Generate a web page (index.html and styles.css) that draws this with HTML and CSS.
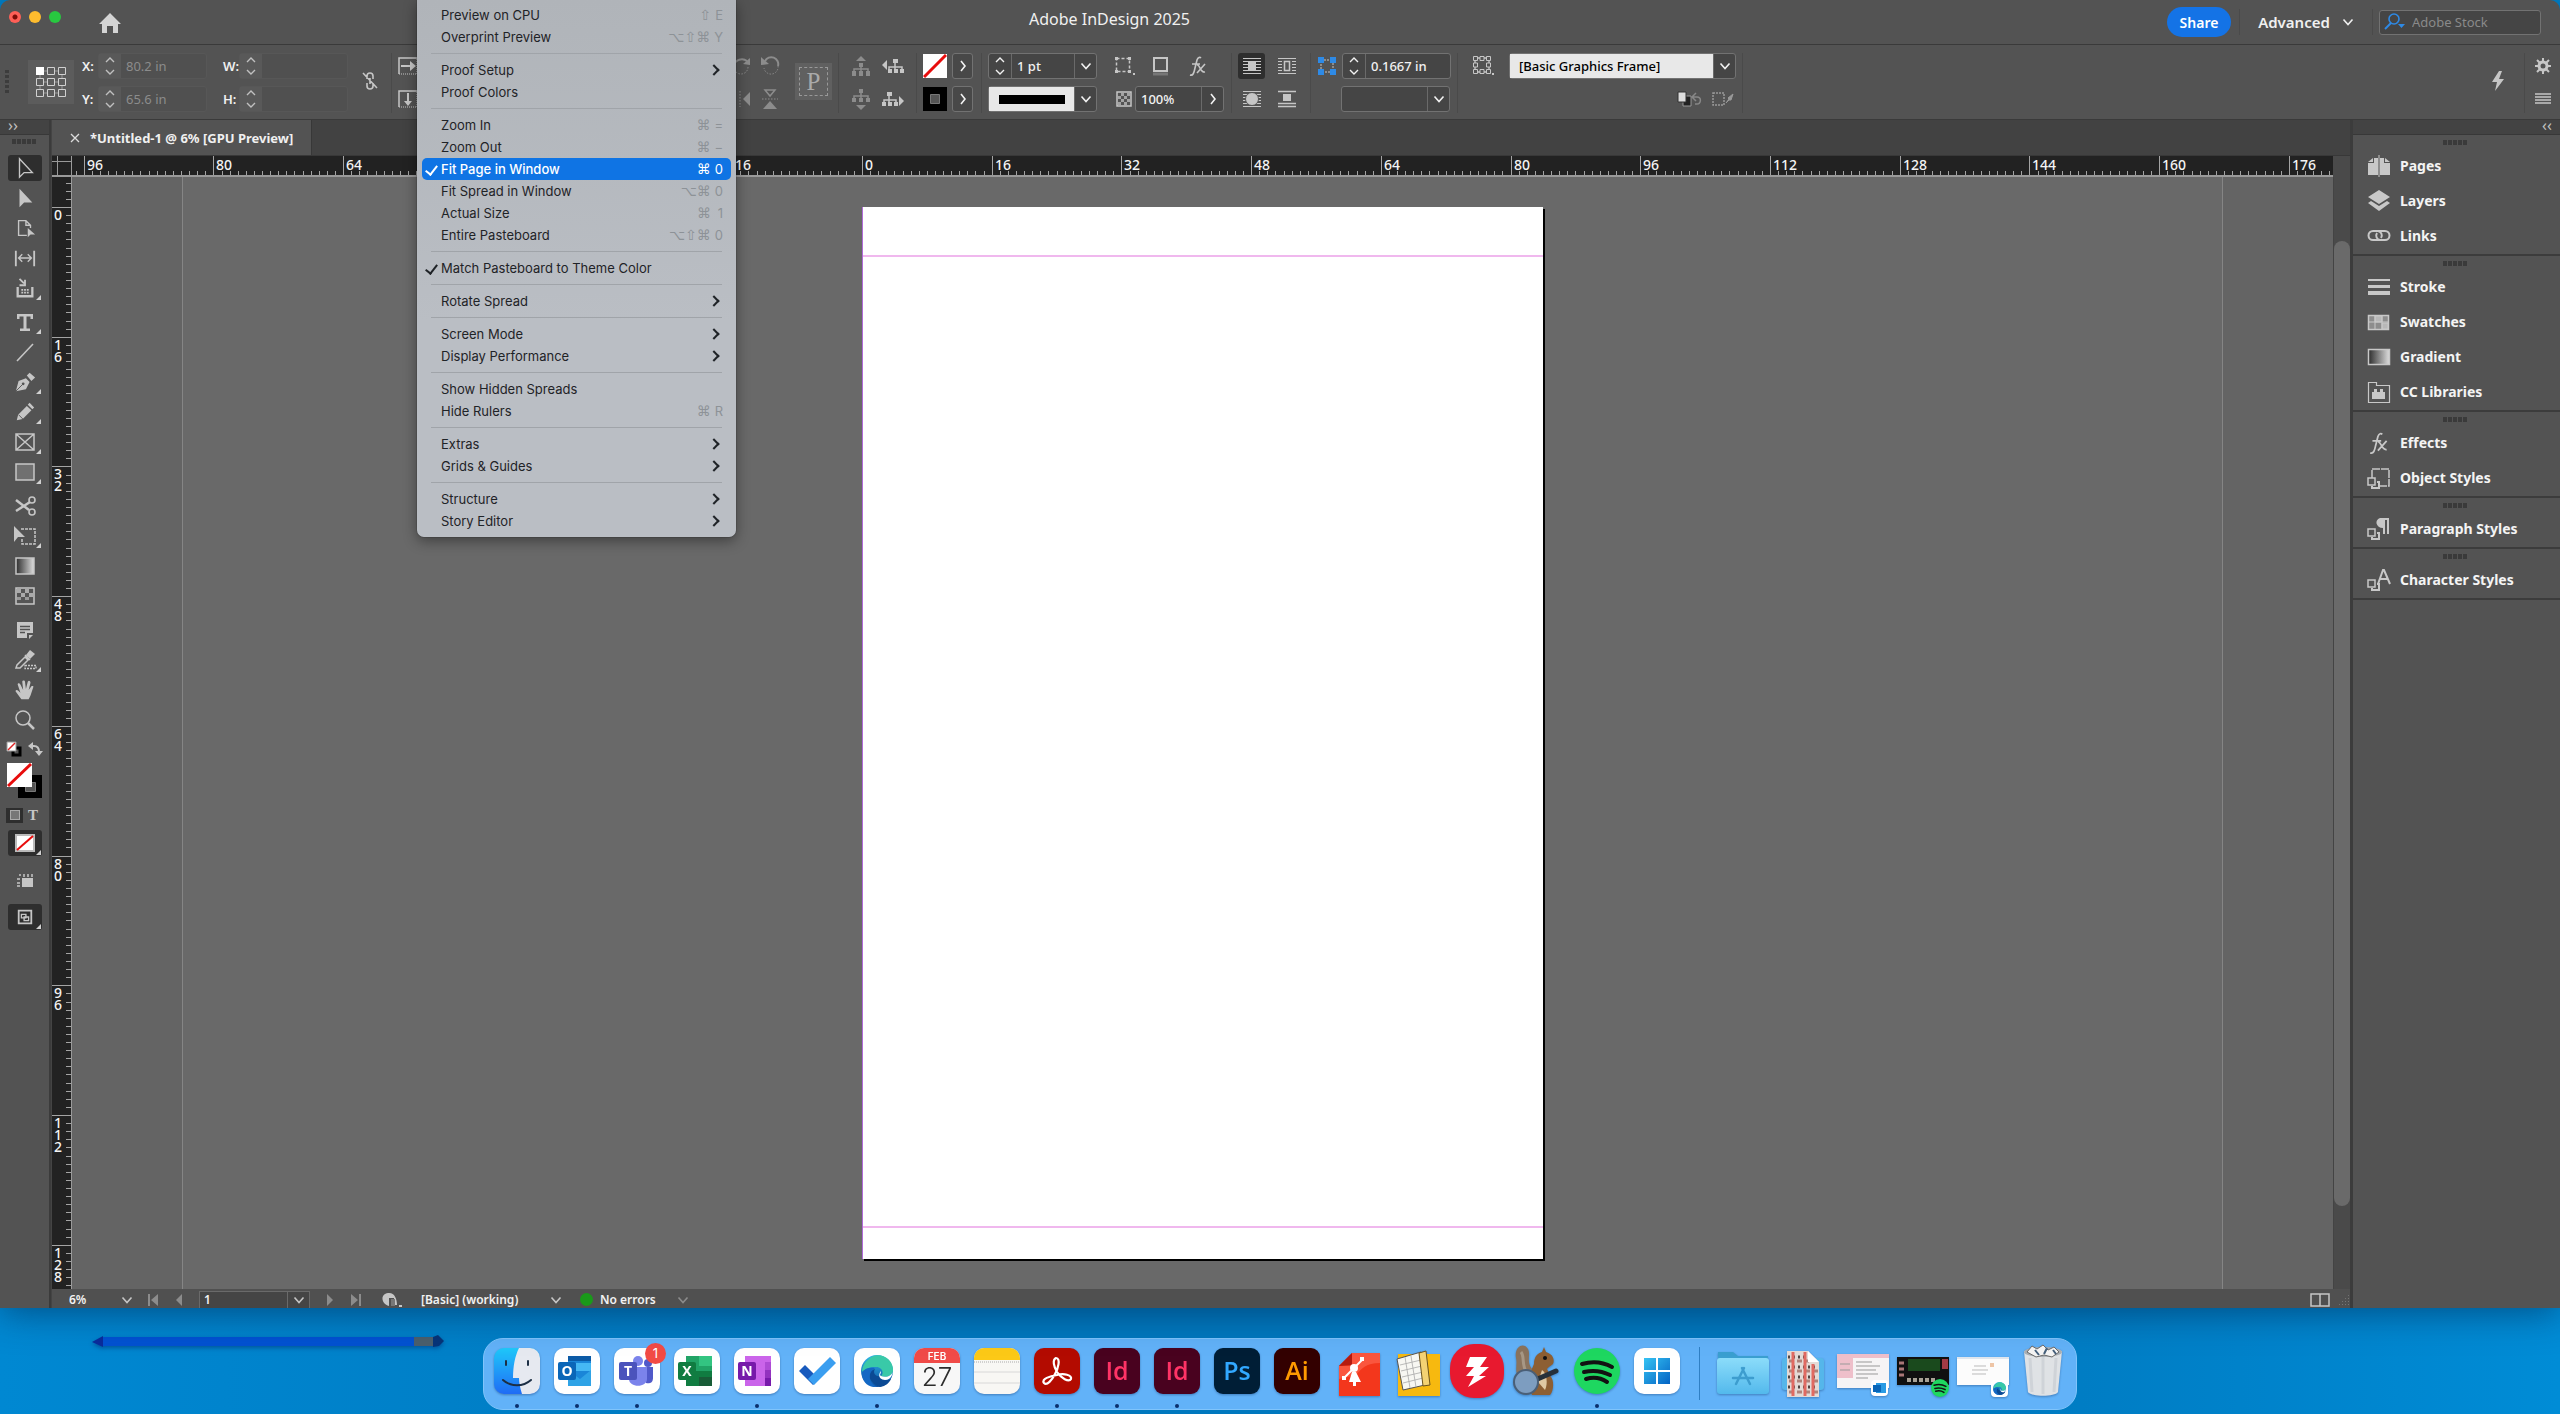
FILE: index.html
```html
<!DOCTYPE html>
<html lang="en">
<head>
<meta charset="utf-8">
<title>Adobe InDesign 2025</title>
<link rel="stylesheet" href="styles.css">
</head>
<body>
<svg class="sprite" aria-hidden="true">
  <defs>
    <linearGradient id="g-dark"><stop offset="0" stop-color="#2c2c2c"/><stop offset="1" stop-color="#dedede"/></linearGradient>
    <linearGradient id="g-finder" x2="0" y2="1"><stop offset="0" stop-color="#1fc8fa"/><stop offset="1" stop-color="#1f6cf5"/></linearGradient>
    <linearGradient id="g-edge" x2="0" y2="1"><stop offset="0" stop-color="#2fb6e8"/><stop offset="1" stop-color="#0c4fa0"/></linearGradient>
    <linearGradient id="g-win" x2="1" y2="1"><stop offset="0" stop-color="#35c3f3"/><stop offset="1" stop-color="#0463c4"/></linearGradient>
    <linearGradient id="g-folder" x2="0" y2="1"><stop offset="0" stop-color="#8bdcfa"/><stop offset="1" stop-color="#53b9ec"/></linearGradient>
  </defs>
  <symbol id="chev" viewBox="0 0 12 12"><path d="M1.500 3.500 6 8.500 10.500 3.500" fill="none" stroke="currentColor" stroke-width="1.600"/></symbol>
  <symbol id="chev-r" viewBox="0 0 12 12"><path d="M4 1 8 6 4 11" fill="none" stroke="currentColor" stroke-width="1.600"/></symbol>
  <symbol id="spin" viewBox="0 0 12 20"><path d="M2 6 6 2 10 6M2 14 6 18 10 14" fill="none" stroke="currentColor" stroke-width="1.400"/></symbol>
  <symbol id="home" viewBox="0 0 24 20"><path d="M12 0 1 11h3v9h5v-7h6v7h5v-9h3Z" fill="currentColor"/></symbol>
  <symbol id="refpoint" viewBox="0 0 46 44"><g fill="none" stroke="#d0d0d0"><path d="M15 11h5M26 11h5M15 22h5M26 22h5M15 33h5M26 33h5M12 15v3M12 26v3M34 15v3M34 26v3" stroke="#9a9a9a"/><path d="M19.500 7.500h7v7h-7zM30.500 7.500h7v7h-7zM8.500 18.500h7v7h-7zM19.500 18.500h7v7h-7zM30.500 18.500h7v7h-7zM8.500 29.500h7v7h-7zM19.500 29.500h7v7h-7zM30.500 29.500h7v7h-7z"/></g><path d="M8 7h8v8H8z" fill="#fff"/></symbol>
  <symbol id="unlink" viewBox="0 0 16 20"><path d="M5 8V5a3 3 0 0 1 6 0v3M5 12v3a3 3 0 0 0 6 0v-3M8 7v6M1 2l14 15" fill="none" stroke="currentColor" stroke-width="1.600"/></symbol>
  <symbol id="scale-x" viewBox="0 0 20 20"><path d="M19 2H1v16" fill="none" stroke="currentColor" stroke-width="1.500"/><path d="M1 18h18V2" fill="none" stroke="currentColor" stroke-dasharray="1 1"/><path d="M3 9h9V5l6 5-6 5v-4H3z" fill="currentColor"/></symbol>
  <symbol id="scale-y" viewBox="0 0 20 20"><path d="M19 2H1v16" fill="none" stroke="currentColor" stroke-width="1.500"/><path d="M1 18h18V2" fill="none" stroke="currentColor" stroke-dasharray="1 1"/><path d="M9 4h2v8h3l-4 5-4-5h3z" fill="currentColor"/></symbol>
  <symbol id="rot-cw" viewBox="0 0 20 20"><path d="M2 9a8 7 0 0 1 13-4" fill="none" stroke="currentColor" stroke-width="2"/><path d="m11 8 7 1V2z" fill="currentColor"/><path d="M16 11a7 7 0 0 1-14 0" fill="none" stroke="currentColor" stroke-dasharray="1.500 1.500"/></symbol>
  <symbol id="rot-ccw" viewBox="0 0 20 20"><path d="M5 5a7 7 0 0 1 13 5" fill="none" stroke="currentColor" stroke-width="2"/><path d="m9 8-8 1V1z" fill="currentColor"/><path d="M18 10a7 7 0 0 1-14 2" fill="none" stroke="currentColor" stroke-dasharray="1.500 1.500"/></symbol>
  <symbol id="flip-h" viewBox="0 0 20 20"><path d="M8 2v16" stroke="currentColor" stroke-dasharray="1.500 1.500"/><path d="M18 3v14l-7-7z" fill="currentColor"/></symbol>
  <symbol id="flip-v" viewBox="0 0 20 20"><path d="M2 10h16" stroke="currentColor" stroke-dasharray="1.500 1.500"/><path d="M5 1h10l-5 6z" fill="none" stroke="currentColor" stroke-width="1.500"/><path d="M3 20h14l-7-8z" fill="currentColor"/></symbol>
  <symbol id="tree-up" viewBox="0 0 24 22"><path d="m7 6 5-5 5 5z" fill="currentColor"/><path d="M12 8v6M5 17v-3h14v3M12 14v3" fill="none" stroke="currentColor" stroke-width="1.500"/><path d="M10 8h4v4h-4zM3 16h4v5H3zM10 16h4v5h-4zM17 16h4v5h-4z" fill="currentColor"/></symbol>
  <symbol id="tree-dn" viewBox="0 0 24 22"><path d="m7 17 5 5 5-5z" fill="currentColor"/><path d="M12 2v6M5 11V8h14v3M12 8v3" fill="none" stroke="currentColor" stroke-width="1.500"/><path d="M10 1h4v4h-4zM3 10h4v4H3zM10 10h4v4h-4zM17 10h4v4h-4z" fill="currentColor"/></symbol>
  <symbol id="tree-l" viewBox="0 0 24 20"><path d="M6 4v10L1 9z" fill="currentColor"/><path d="M14 4v7M8 14v-3h13v3M14 11v3" fill="none" stroke="currentColor" stroke-width="1.500"/><path d="M12 3h5v4h-5zM7 13h4v4H7zM13 13h4v4h-4zM19 13h4v4h-4z" fill="currentColor"/></symbol>
  <symbol id="tree-r" viewBox="0 0 24 20"><path d="M18 7v10l5-5z" fill="currentColor"/><path d="M8 4v7M3 14v-3h12v3M8 11v3" fill="none" stroke="currentColor" stroke-width="1.500"/><path d="M6 3h5v4H6zM1 13h4v4H1zM7 13h4v4H7zM13 13h4v4h-4z" fill="currentColor"/></symbol>
  <symbol id="none" viewBox="0 0 24 24"><path d="M0 0h24v24H0z" fill="#fff"/><path d="M1 23 23 1" stroke="#e80c0c" stroke-width="3"/></symbol>
  <symbol id="stroke-sw" viewBox="0 0 24 24"><path d="M0 0h24v24H0z" fill="#000"/><path d="M7.500 7.500h9v9h-9z" fill="#555" stroke="#777"/></symbol>
  <symbol id="corner-opt" viewBox="0 0 22 22"><path d="M3.500 3.500h13v13h-13z" fill="none" stroke="currentColor" stroke-dasharray="3 2" stroke-width="1.500"/><path d="M2 2h3v3H2zM15 2h3v3h-3zM2 15h3v3H2zM15 15h3v3h-3zM20 18h2v2h-2z" fill="currentColor"/></symbol>
  <symbol id="shadow" viewBox="0 0 22 22"><path d="M4 3h13v13H4z" fill="none" stroke="currentColor" stroke-width="2"/><path d="M3 19h15" stroke="#777" stroke-width="3"/></symbol>
  <symbol id="fx" viewBox="0 0 22 22"><path d="M3 20c3 1 4-2 5-7l2-8c1-3 3-3 4-2M5 9h8M10 10c3-1 3 8 8 7M18 9l-8 9" fill="none" stroke="currentColor" stroke-width="1.600"/></symbol>
  <symbol id="opacity" viewBox="0 0 22 22"><path d="M4 4h14v14H4z" fill="none" stroke="currentColor" stroke-width="1.500"/><path d="M8 5h3v3H8zM14 5h3v3h-3zM5 8h3v3H5zM11 8h3v3h-3zM8 11h3v3H8zM14 11h3v3h-3zM5 14h3v3H5zM11 14h3v3h-3z" fill="currentColor" opacity=".7"/></symbol>
  <symbol id="wrap-none" viewBox="0 0 20 18"><path d="M1 1.500h18M1 4.500h18M1 7.500h18M1 10.500h18M1 13.500h18M1 16.500h18" stroke="currentColor"/><path d="M6 4h8v10H6z" fill="currentColor"/></symbol>
  <symbol id="wrap-box" viewBox="0 0 20 18"><path d="M1 1.500h18M1 4.500h4M15 4.500h4M1 7.500h4M15 7.500h4M1 10.500h4M15 10.500h4M1 13.500h4M15 13.500h4M1 16.500h18" stroke="currentColor"/><path d="M7.500 4.500h5v9h-5z" fill="none" stroke="currentColor" stroke-width="1.500"/></symbol>
  <symbol id="wrap-shape" viewBox="0 0 20 18"><path d="M1 1.500h18M1 4.500h18M1 7.500h18M1 10.500h18M1 13.500h18M1 16.500h18" stroke="currentColor"/><circle cx="10" cy="9" r="6.500" fill="currentColor" stroke="#535353"/></symbol>
  <symbol id="wrap-jump" viewBox="0 0 20 18"><path d="M1 1.500h18M1 13.500h18M1 16.500h18" stroke="currentColor" stroke-width="1.500"/><path d="M6 4h8v7H6z" fill="currentColor"/></symbol>
  <symbol id="corner-blue" viewBox="0 0 20 20"><path d="M4 4h12v12H4z" fill="none" stroke="#c6c6c6" stroke-dasharray="2 1"/><path d="M1 1h6v6H1zM13 1h6v6h-6zM1 13h6v6H1zM13 13h6v6h-6z" fill="#2e8ae6"/></symbol>
  <symbol id="obj-style" viewBox="0 0 22 22"><path d="M3 3h14v14H3z" fill="none" stroke="currentColor" stroke-width="1.300"/><g fill="#535353" stroke="currentColor"><path d="M1.500 1.500h4v4h-4zM8 1.500h4v4H8zM14.500 1.500h4v4h-4zM1.500 8h4v4h-4zM14.500 8h4v4h-4zM1.500 14.500h4v4h-4zM8 14.500h4v4H8zM14.500 14.500h4v4h-4z"/></g><path d="M20 18h2v2h-2z" fill="currentColor"/></symbol>
  <symbol id="clear-ovr" viewBox="0 0 28 20"><path d="M8 7h8v10H8z" fill="#222" stroke="#999"/><path d="M3 3h8v10H3z" fill="#ddd" stroke="#333"/><path d="M20 15h2c4 0 5-7 0-7h-4M21 4l-4 4 4 4" fill="none" stroke="#888" stroke-width="1.500"/></symbol>
  <symbol id="redefine" viewBox="0 0 24 20"><path d="M2 4h11v12H2z" fill="none" stroke="#999" stroke-width="1.500" stroke-dasharray="2 1"/><path d="m15 14 3-4-1-1 5-4-2 6h-2z" stroke="#999" fill="#999"/></symbol>
  <symbol id="bolt" viewBox="0 0 16 20"><path d="M9 0 2 11h5l-2 9 9-12H9l3-8z" fill="currentColor"/></symbol>
  <symbol id="gear" viewBox="0 0 16 16"><circle cx="8" cy="8" r="4" fill="none" stroke="currentColor" stroke-width="3"/><path d="M8 0v3M8 13v3M0 8h3M13 8h3M2 2l3 3M11 11l3 3M14 2l-3 3M5 11l-3 3" stroke="currentColor" stroke-width="2"/></symbol>
  <symbol id="lines" viewBox="0 0 16 14"><path d="M0 2h16M0 5h16M0 8h16M0 11h16" stroke="currentColor" stroke-width="1.500"/></symbol>
  <symbol id="search" viewBox="0 0 22 18"><circle cx="10" cy="6" r="5" fill="none" stroke="currentColor" stroke-width="1.600"/><path d="m7 10-6 6" stroke="currentColor" stroke-width="2"/><path d="M14 11h7l-3.500 4z" fill="currentColor"/></symbol>

  <symbol id="t-select" viewBox="0 0 24 24"><path d="M6 2v20l5-5h9z" fill="none" stroke="currentColor" stroke-width="1.500"/></symbol>
  <symbol id="t-direct" viewBox="0 0 24 24"><path d="M6 2v20l5-5h9z" fill="currentColor"/></symbol>
  <symbol id="t-page" viewBox="0 0 24 24"><path d="M14 20H5V4h8l5 5v3M13 4v5h5" fill="none" stroke="currentColor" stroke-width="1.500"/><path d="M15 12v10l3-3h5z" fill="currentColor"/></symbol>
  <symbol id="t-gap" viewBox="0 0 24 24"><path d="M2 4v17M22 4v17" stroke="currentColor" stroke-width="2"/><path d="M5 12h14M9 8l-4 4 4 4M15 8l4 4-4 4" fill="none" stroke="currentColor" stroke-width="1.500"/></symbol>
  <symbol id="t-content" viewBox="0 0 24 24"><path d="M4 11v10h16V11" fill="none" stroke="currentColor" stroke-width="2.500"/><path d="M8 14h9M8 17h9" stroke="currentColor" stroke-width="2" stroke-dasharray="2 1"/><path d="m6 2 5 5M12 3v6H6" fill="none" stroke="currentColor" stroke-width="2"/></symbol>
  <symbol id="t-type" viewBox="0 0 24 24"><path d="M4 4h16v5h-2.500V6.500h-4v12H17V21H7v-2.500h3.500v-12h-4V9H4z" fill="currentColor"/></symbol>
  <symbol id="t-line" viewBox="0 0 24 24"><path d="M4 21 20 4" stroke="currentColor" stroke-width="1.600"/></symbol>
  <symbol id="t-pen" viewBox="0 0 24 24"><path d="m2 22 3-11 8-3 4 4-4 8zM14 5l3-3 6 5-4 4z" fill="currentColor"/><path d="m2 22 7-7" stroke="#535353"/><circle cx="10" cy="14" r="1.500" fill="#535353"/></symbol>
  <symbol id="t-pencil" viewBox="0 0 24 24"><path d="m3 21 1.500-6L14 5.500 19 10l-9.500 9.500zM15 4l2-2 5 5-2 2z" fill="currentColor"/><path d="m5 15 5 5" stroke="#535353"/></symbol>
  <symbol id="t-frame" viewBox="0 0 24 24"><path d="M3 4h18v16H3zL21 20M21 4 3 20" fill="none" stroke="currentColor" stroke-width="1.500"/></symbol>
  <symbol id="t-rect" viewBox="0 0 24 24"><path d="M3 4h18v16H3z" fill="#707070" stroke="currentColor" stroke-width="1.500"/></symbol>
  <symbol id="t-scissors" viewBox="0 0 24 24"><circle cx="19" cy="6" r="3" fill="none" stroke="currentColor" stroke-width="1.600"/><circle cx="19" cy="18" r="3" fill="none" stroke="currentColor" stroke-width="1.600"/><path d="m3 6 13 10M3 17l14-9" stroke="currentColor" stroke-width="2.500"/></symbol>
  <symbol id="t-free" viewBox="0 0 24 24"><path d="M8 5h14v15H9v-6" fill="none" stroke="currentColor" stroke-width="1.500" stroke-dasharray="3 1"/><path d="M1 2v16l4-5h7z" fill="currentColor"/></symbol>
  <symbol id="t-grad" viewBox="0 0 24 24"><path d="M3 4h18v16H3z" fill="url(#g-dark)" stroke="currentColor" stroke-width="1.500"/></symbol>
  <symbol id="t-feather" viewBox="0 0 24 24"><path d="M3 4h18v16H3z" fill="#555" stroke="currentColor" stroke-width="1.500"/><path d="M4 5h4v4H4zM12 5h4v4h-4zM8 9h4v4H8zM16 9h4v4h-4z" fill="#aaa"/><path d="M4 13h4v3H4zM12 13h4v3h-4z" fill="#999"/></symbol>
  <symbol id="t-note" viewBox="0 0 24 24"><path d="M4 4h16v11h-6v5H4zM16 17h4l-4 4z" fill="currentColor"/><path d="M7 8.500h10M7 11.500h10M7 14.500h5" stroke="#535353" stroke-width="1.500"/></symbol>
  <symbol id="t-drop" viewBox="0 0 24 24"><path d="m3 20 1-3 8-8 3 3-8 8zM12 7l5 5M14 8l4-4" fill="none" stroke="currentColor" stroke-width="1.500"/><path d="m13 7 4-5 5 4-5 5z" fill="currentColor"/><path d="M12 17.500h11v3H12z" fill="none" stroke="currentColor" stroke-width="1.300" stroke-dasharray="2 1"/></symbol>
  <symbol id="t-hand" viewBox="0 0 24 24"><path d="M8 22 2 14c-1-2 1-3 3-1l2 2L4 6c0-2 2-2 3 0l3 6-1-9c0-2 3-2 3 0l1 8 2-8c1-2 3-1 3 1l-2 8 3-4c1-1 3 0 2 1l-3 9-2 4z" fill="currentColor"/></symbol>
  <symbol id="t-zoom" viewBox="0 0 24 24"><circle cx="10" cy="10" r="7" fill="none" stroke="currentColor" stroke-width="1.500"/><path d="m15 15 6 6" stroke="currentColor" stroke-width="2.500"/></symbol>
  <symbol id="t-default" viewBox="0 0 16 16"><path d="M7 7h7v7H7z" fill="#555" stroke="#000" stroke-width="3"/><path d="M1 1h9v9H1z" fill="#fff" stroke="#999"/><path d="m2 9 7-7" stroke="#d22" stroke-width="1.500"/></symbol>
  <symbol id="t-swap" viewBox="0 0 16 16"><path d="M4 5h3c3 0 5 2 5 6" fill="none" stroke="currentColor" stroke-width="2"/><path d="M6 1v8L1 5zM8 10h8l-4 5z" fill="currentColor"/></symbol>
  <symbol id="t-view" viewBox="0 0 20 20"><path d="M7 8h11v9H7z" fill="currentColor"/><path d="M2 9h3M2 13h3M2 16h3M5 4v2M9 4v3M13 4v3M17 4v3" stroke="currentColor" stroke-width="1.500"/></symbol>
  <symbol id="t-screen" viewBox="0 0 20 20"><path d="M3 3h14v14H3z" fill="none" stroke="currentColor" stroke-width="2"/><path d="M6 7h5v4H6zM9 10h5v4H9z" fill="none" stroke="currentColor" stroke-width="1.500"/></symbol>

  <symbol id="p-pages" viewBox="0 0 24 24"><path d="M1 8 6 4v4zM23 8l-5-4v4zM1 9h6V4h4v17H1zM13 4h4v5h6v12H13z" fill="currentColor"/><path d="M12 1v22" stroke="currentColor"/></symbol>
  <symbol id="p-layers" viewBox="0 0 24 24"><path d="m12 1 11 7-11 7L1 8zM1 14l3-2 8 5 8-5 3 2-11 8z" fill="currentColor"/></symbol>
  <symbol id="p-links" viewBox="0 0 24 24"><path d="M13 16H6a4.500 4.500 0 0 1 0-9h5a4.500 4.500 0 0 1 3 7M11 7h7a4.500 4.500 0 0 1 0 9h-5a4.500 4.500 0 0 1-3-7" fill="none" stroke="currentColor" stroke-width="2"/></symbol>
  <symbol id="p-stroke" viewBox="0 0 24 24"><path d="M1 4h22v2H1zM1 10h22v3H1zM1 16h22v4H1z" fill="currentColor"/></symbol>
  <symbol id="p-swatches" viewBox="0 0 24 24"><path d="M1.500 5.500h20v14h-20z" fill="#8d8d8d" stroke="currentColor" stroke-width="1.500"/><path d="M8 6h7v6H8zM15 13h6v6h-6zM2 12h20M8 6v13M15 6v13" stroke="currentColor" fill="#b8b8b8"/></symbol>
  <symbol id="p-grad" viewBox="0 0 24 24"><path d="M1.500 4.500h21v15h-21z" fill="url(#g-dark)" stroke="currentColor" stroke-width="1.500"/></symbol>
  <symbol id="p-cc" viewBox="0 0 24 24"><path d="M1.500 22.500v-20h8v3h13v17z" fill="none" stroke="currentColor" stroke-width="1.200"/><path d="M5 12h2v-3h3v3h3v-3h3v3h2v7H5z" fill="currentColor"/></symbol>
  <symbol id="p-obj" viewBox="0 0 24 24"><path d="M5 12V3h17v17H12" fill="none" stroke="currentColor" stroke-width="1.500" stroke-dasharray="8 1"/><path d="M1 12h7v7H1z" fill="#535353" stroke="currentColor" stroke-width="1.500"/><path d="M10 16h2v6H5v-2" fill="none" stroke="currentColor" stroke-width="2"/></symbol>
  <symbol id="p-para" viewBox="0 0 24 24"><path d="M13 1h9v16h-2V3h-2v14h-2v-6c-7 0-9-8-3-10z" fill="currentColor"/><path d="M1 12h7v7H1z" fill="#535353" stroke="currentColor" stroke-width="1.500"/><path d="M10 16h2v6H5v-2" fill="none" stroke="currentColor" stroke-width="2"/></symbol>
  <symbol id="p-char" viewBox="0 0 24 24"><path d="m11 16 5-14h1l6 14M13 11h8" fill="none" stroke="currentColor" stroke-width="2"/><path d="M1 12h7v7H1z" fill="#535353" stroke="currentColor" stroke-width="1.500"/><path d="M10 16h2v6H5v-2" fill="none" stroke="currentColor" stroke-width="2"/></symbol>

  <symbol id="s-first" viewBox="0 0 12 12"><path d="M1 0h2v12H1zM11 0v12L4 6z" fill="currentColor"/></symbol>
  <symbol id="s-prev" viewBox="0 0 12 12"><path d="M9 0v12L3 6z" fill="currentColor"/></symbol>
  <symbol id="s-next" viewBox="0 0 12 12"><path d="M3 0v12l6-6z" fill="currentColor"/></symbol>
  <symbol id="s-last" viewBox="0 0 12 12"><path d="M9 0h2v12H9zM1 0v12l7-6z" fill="currentColor"/></symbol>
  <symbol id="s-pre" viewBox="0 0 22 16"><path d="M8 14C0 12-1 2 7 1c6-1 9 5 9 12h-3V6H8z" fill="currentColor"/><path d="M10 7h4v7h-4z" fill="#777"/><path d="M18 13h3v2h-3z" fill="currentColor"/></symbol>
  <symbol id="s-split" viewBox="0 0 20 14"><path d="M1 1h18v12H1zM10 1v12" fill="none" stroke="currentColor" stroke-width="1.500"/></symbol>

  <symbol id="edge-mark" viewBox="0 0 32 32"><circle cx="16" cy="16" r="16" fill="url(#g-edge)"/><path d="M8 4c10-9 25 0 24 12-1 5-7 7-12 5 4-4 0-10-6-9-6 0-9 2-13 5 0-5 3-10 7-13z" fill="#39c9a8"/><path d="M20 21c-7 1-8-4-6-7-8 2-8 13 5 18 6-1 9-4 11-8-4 2-9 1-10-3z" fill="#0b4a94"/><path d="M32 16c-1 5-7 7-12 5-2-1 0-2 0-5-2 2-4 8 4 9 3 0 6-2 7-5z" fill="#fff"/><path d="M14 13c-7 4-8 14 2 19C6 33 0 25 1 17c3-4 8-5 13-4z" fill="#1468c4"/></symbol>
  <symbol id="spot-mark" viewBox="0 0 46 46"><circle cx="23" cy="23" r="23" fill="#1ed760"/><path d="M8 16c10-3 21-2 30 3M10 24c9-2 18-1 26 3M12 31c7-2 15-1 21 3" fill="none" stroke="#121212" stroke-width="4" stroke-linecap="round"/></symbol>
</svg>

<div class="window">
  <header class="titlebar">
    <div class="lights"><span class="light close"></span><span class="light min"></span><span class="light max"></span></div>
    <button class="home" aria-label="Home"><svg width="24" height="20"><use href="#home"/></svg></button>
    <h1>Adobe InDesign 2025</h1>
    <div class="title-actions">
      <button class="share">Share</button>
      <button class="workspace-pick">Advanced <svg width="12" height="12"><use href="#chev"/></svg></button>
      <label class="stock"><svg width="22" height="18"><use href="#search"/></svg><input type="search" placeholder="Adobe Stock" aria-label="Search Adobe Stock"></label>
    </div>
  </header>

  <section class="control-bar" aria-label="Control">
    <div class="grip-v"></div>
    <button class="refpoint" aria-label="Reference point"><svg width="46" height="44"><use href="#refpoint"/></svg></button>
    <div class="rows">
      <div class="row"><label for="fx-x">X:</label><div class="combo off"><button aria-label="Step X"><svg width="12" height="20"><use href="#spin"/></svg></button><input id="fx-x" value="80.2 in"></div></div>
      <div class="row"><label for="fx-y">Y:</label><div class="combo off"><button aria-label="Step Y"><svg width="12" height="20"><use href="#spin"/></svg></button><input id="fx-y" value="65.6 in"></div></div>
    </div>
    <div class="rows">
      <div class="row"><label for="fx-w">W:</label><div class="combo off"><button aria-label="Step W"><svg width="12" height="20"><use href="#spin"/></svg></button><input id="fx-w"></div></div>
      <div class="row"><label for="fx-h">H:</label><div class="combo off"><button aria-label="Step H"><svg width="12" height="20"><use href="#spin"/></svg></button><input id="fx-h"></div></div>
    </div>
    <button class="tall" aria-label="Constrain proportions"><svg width="16" height="20"><use href="#unlink"/></svg></button>
    <div class="rows ruled">
      <div class="row"><svg width="20" height="20"><use href="#scale-x"/></svg></div>
      <div class="row"><svg width="20" height="20"><use href="#scale-y"/></svg></div>
    </div>
    <div class="rows dim">
      <div class="row gap-m"><svg width="20" height="20"><use href="#rot-cw"/></svg><svg width="20" height="20"><use href="#rot-ccw"/></svg></div>
      <div class="row gap-m"><svg width="20" height="20"><use href="#flip-h"/></svg><svg width="20" height="20"><use href="#flip-v"/></svg></div>
    </div>
    <div class="p-box"><span>P</span></div>
    <div class="rows ruled inset-m">
      <div class="row gap-m"><svg class="dim" width="24" height="22"><use href="#tree-up"/></svg><svg width="24" height="20"><use href="#tree-l"/></svg></div>
      <div class="row gap-m"><svg class="dim" width="24" height="22"><use href="#tree-dn"/></svg><svg width="24" height="20"><use href="#tree-r"/></svg></div>
    </div>
    <div class="rows ruled">
      <div class="row gap-s"><svg width="24" height="24"><use href="#none"/></svg><button class="boxed" aria-label="Fill options"><svg width="12" height="12"><use href="#chev-r"/></svg></button></div>
      <div class="row gap-s"><svg width="24" height="24"><use href="#stroke-sw"/></svg><button class="boxed" aria-label="Stroke options"><svg width="12" height="12"><use href="#chev-r"/></svg></button></div>
    </div>
    <div class="rows ruled">
      <div class="row"><div class="combo"><button aria-label="Step weight"><svg width="12" height="20"><use href="#spin"/></svg></button><input value="1 pt" aria-label="Stroke weight"><button aria-label="Weight list"><svg width="12" height="12"><use href="#chev"/></svg></button></div></div>
      <div class="row"><div class="combo"><div class="stroke-sample"></div><button aria-label="Stroke type"><svg width="12" height="12"><use href="#chev"/></svg></button></div></div>
    </div>
    <div class="rows inset-s">
      <div class="row gap-l"><svg width="22" height="22"><use href="#corner-opt"/></svg><svg width="22" height="22"><use href="#shadow"/></svg><svg width="22" height="22"><use href="#fx"/></svg></div>
      <div class="row"><svg width="22" height="22"><use href="#opacity"/></svg><div class="combo opacity"><input value="100%" aria-label="Opacity"><button aria-label="Opacity slider"><svg width="12" height="12"><use href="#chev-r"/></svg></button></div></div>
    </div>
    <div class="rows ruled">
      <div class="row gap-m"><button class="wrap on" aria-label="No text wrap"><svg width="20" height="18"><use href="#wrap-none"/></svg></button><button class="wrap" aria-label="Wrap around box"><svg width="20" height="18"><use href="#wrap-box"/></svg></button></div>
      <div class="row gap-m"><button class="wrap" aria-label="Wrap around shape"><svg width="20" height="18"><use href="#wrap-shape"/></svg></button><button class="wrap" aria-label="Jump object"><svg width="20" height="18"><use href="#wrap-jump"/></svg></button></div>
    </div>
    <div class="rows ruled">
      <div class="row gap-s"><svg width="20" height="20"><use href="#corner-blue"/></svg><div class="combo"><button aria-label="Step corner"><svg width="12" height="20"><use href="#spin"/></svg></button><input value="0.1667 in" aria-label="Corner size"></div></div>
      <div class="row end"><div class="combo"><select aria-label="Corner shape"><option></option></select><button aria-label="Corner list"><svg width="12" height="12"><use href="#chev"/></svg></button></div></div>
    </div>
    <div class="rows ruled inset-l">
      <div class="row gap-l"><svg width="22" height="22"><use href="#obj-style"/></svg><div class="combo style"><select aria-label="Object style"><option>[Basic Graphics Frame]</option></select><button aria-label="Object style list"><svg width="12" height="12"><use href="#chev"/></svg></button></div></div>
      <div class="row end gap-m"><svg width="28" height="20"><use href="#clear-ovr"/></svg><svg width="24" height="20"><use href="#redefine"/></svg></div>
    </div>
    <div class="rows ruled"></div>
    <button class="tall" aria-label="Quick apply"><svg width="16" height="20"><use href="#bolt"/></svg></button>
    <div class="rows ruled inset-m">
      <div class="row"><svg width="16" height="16"><use href="#gear"/></svg></div>
      <div class="row"><svg width="16" height="14"><use href="#lines"/></svg></div>
    </div>
  </section>

  <div class="workspace">
    <aside class="tools" aria-label="Tools">
      <div class="panel-head">››</div>
      <div class="grip-h"></div>
      <div class="tool-group">
        <button class="on" aria-label="Selection"><svg width="22" height="22"><use href="#t-select"/></svg></button>
        <button aria-label="Direct selection"><svg width="22" height="22"><use href="#t-direct"/></svg></button>
        <button aria-label="Page"><svg width="22" height="22"><use href="#t-page"/></svg></button>
        <button aria-label="Gap"><svg width="24" height="22"><use href="#t-gap"/></svg></button>
        <button class="more" aria-label="Content collector"><svg width="22" height="22"><use href="#t-content"/></svg></button>
      </div>
      <div class="tool-group">
        <button class="more" aria-label="Type"><svg width="24" height="24"><use href="#t-type"/></svg></button>
        <button aria-label="Line"><svg width="24" height="24"><use href="#t-line"/></svg></button>
        <button class="more" aria-label="Pen"><svg width="22" height="22"><use href="#t-pen"/></svg></button>
        <button class="more" aria-label="Pencil"><svg width="22" height="22"><use href="#t-pencil"/></svg></button>
        <button class="more" aria-label="Rectangle frame"><svg width="24" height="24"><use href="#t-frame"/></svg></button>
        <button class="more" aria-label="Rectangle"><svg width="24" height="24"><use href="#t-rect"/></svg></button>
      </div>
      <div class="tool-group">
        <button aria-label="Scissors"><svg width="24" height="24"><use href="#t-scissors"/></svg></button>
        <button class="more" aria-label="Free transform"><svg width="24" height="24"><use href="#t-free"/></svg></button>
        <button aria-label="Gradient swatch"><svg width="24" height="24"><use href="#t-grad"/></svg></button>
        <button aria-label="Gradient feather"><svg width="24" height="24"><use href="#t-feather"/></svg></button>
      </div>
      <div class="tool-group">
        <button aria-label="Note"><svg width="24" height="24"><use href="#t-note"/></svg></button>
        <button class="more" aria-label="Color theme"><svg width="24" height="24"><use href="#t-drop"/></svg></button>
        <button aria-label="Hand"><svg width="22" height="22"><use href="#t-hand"/></svg></button>
        <button aria-label="Zoom"><svg width="24" height="24"><use href="#t-zoom"/></svg></button>
      </div>
      <div class="pair"><svg width="16" height="16"><use href="#t-default"/></svg><svg width="16" height="16"><use href="#t-swap"/></svg></div>
      <svg class="fill-stroke" width="36" height="36" viewBox="0 0 36 36"><path d="M11 12h24v23H11z" fill="#000"/><path d="M18.500 19.500h10v9h-10z" fill="#555" stroke="#777"/><path d="M0 0h25v24H0z" fill="#fff"/><path d="M1 23 24 1" stroke="#e80c0c" stroke-width="3"/></svg>
      <div class="pair"><span class="format-box"><i></i></span><span class="format-t">T</span></div>
      <button class="solo on more" aria-label="Apply none"><svg width="20" height="18" viewBox="0 0 20 18"><path d="M1 1h18v16H1z" fill="#fff" stroke="#bbb" stroke-width="2"/><path d="m2 16 16-14" stroke="#e80c0c" stroke-width="2"/></svg></button>
      <button class="solo" aria-label="View options"><svg width="20" height="20"><use href="#t-view"/></svg></button>
      <button class="solo on more" aria-label="Screen mode"><svg width="18" height="18"><use href="#t-screen"/></svg></button>
    </aside>

    <main class="document">
      <div class="tabs"><div class="tab"><button aria-label="Close document"><svg width="10" height="10" viewBox="0 0 10 10"><path d="m1 1 8 8M9 1 1 9" stroke="#ddd" stroke-width="1.300"/></svg></button><span>*Untitled-1 @ 6% [GPU Preview]</span></div></div>
      <div class="editor">
        <div class="ruler-corner"></div>
        <svg class="ruler ruler-x" id="ruler-x"></svg>
        <div class="scroll-top"></div>
        <svg class="ruler ruler-y" id="ruler-y"></svg>
        <div class="canvas" id="canvas"><div class="pasteboard"><div class="page" id="page"></div></div></div>
        <div class="scrollbar"><div class="thumb"></div></div>
      </div>
      <footer class="status">
        <div class="zoom-pick"><select aria-label="Zoom level"><option>6%</option></select><svg width="12" height="12"><use href="#chev"/></svg></div>
        <svg class="dim" width="12" height="12"><use href="#s-first"/></svg>
        <svg class="dim" width="12" height="12"><use href="#s-prev"/></svg>
        <div class="page-pick"><input value="1" aria-label="Page number"><button aria-label="Page list"><svg width="12" height="12"><use href="#chev"/></svg></button></div>
        <svg class="dim" width="12" height="12"><use href="#s-next"/></svg>
        <svg class="dim" width="12" height="12"><use href="#s-last"/></svg>
        <svg class="preflight" width="22" height="16"><use href="#s-pre"/></svg>
        <div class="profile-pick"><select aria-label="Preflight profile"><option>[Basic] (working)</option></select><svg width="12" height="12"><use href="#chev"/></svg></div>
        <div class="errors"><i></i><span>No errors</span><svg class="dim" width="12" height="12"><use href="#chev"/></svg></div>
        <svg class="split" width="20" height="14"><use href="#s-split"/></svg>
        <div class="resize"></div>
      </footer>
    </main>

    <aside class="panels" aria-label="Panels">
      <div class="panel-head right">‹‹</div>
      <section><button><svg width="24" height="24"><use href="#p-pages"/></svg>Pages</button><button><svg width="24" height="24"><use href="#p-layers"/></svg>Layers</button><button><svg width="24" height="24"><use href="#p-links"/></svg>Links</button></section>
      <section><button><svg width="24" height="24"><use href="#p-stroke"/></svg>Stroke</button><button><svg width="24" height="24"><use href="#p-swatches"/></svg>Swatches</button><button><svg width="24" height="24"><use href="#p-grad"/></svg>Gradient</button><button><svg width="24" height="24"><use href="#p-cc"/></svg>CC Libraries</button></section>
      <section><button><svg width="24" height="24"><use href="#fx"/></svg>Effects</button><button><svg width="24" height="24"><use href="#p-obj"/></svg>Object Styles</button></section>
      <section><button><svg width="24" height="24"><use href="#p-para"/></svg>Paragraph Styles</button></section>
      <section><button><svg width="24" height="24"><use href="#p-char"/></svg>Character Styles</button></section>
    </aside>
  </div>

  <nav class="menu" aria-label="View">
    <button>Preview on CPU<kbd>⇧<b>E</b></kbd></button>
    <button>Overprint Preview<kbd>⌥⇧⌘<b>Y</b></kbd></button>
    <hr>
    <button class="sub">Proof Setup</button>
    <button>Proof Colors</button>
    <hr>
    <button>Zoom In<kbd>⌘<b>=</b></kbd></button>
    <button>Zoom Out<kbd>⌘<b>−</b></kbd></button>
    <button class="checked active">Fit Page in Window<kbd>⌘<b>0</b></kbd></button>
    <button>Fit Spread in Window<kbd>⌥⌘<b>0</b></kbd></button>
    <button>Actual Size<kbd>⌘<b>1</b></kbd></button>
    <button>Entire Pasteboard<kbd>⌥⇧⌘<b>0</b></kbd></button>
    <hr>
    <button class="checked">Match Pasteboard to Theme Color</button>
    <hr>
    <button class="sub">Rotate Spread</button>
    <hr>
    <button class="sub">Screen Mode</button>
    <button class="sub">Display Performance</button>
    <hr>
    <button>Show Hidden Spreads</button>
    <button>Hide Rulers<kbd>⌘<b>R</b></kbd></button>
    <hr>
    <button class="sub">Extras</button>
    <button class="sub">Grids &amp; Guides</button>
    <hr>
    <button class="sub">Structure</button>
    <button class="sub">Story Editor</button>
  </nav>
</div>

<div class="desktop">
  <svg class="wall-pencil" width="352" height="14" viewBox="0 0 352 14"><path d="m0 7 11-6v11z" fill="#0a2c9c"/><path d="M11 2h311v9H11z" fill="#0252d2"/><path d="M322 2h19v9h-19z" fill="#4b5f6c"/><path d="m341 2 5-2 6 6-5 5-6 1z" fill="#073478"/></svg>
  <div class="dock">
    <div class="app run"><svg width="46" height="46" viewBox="0 0 46 46"><rect width="46" height="46" rx="10" fill="url(#g-finder)"/><path d="M25 0h11a10 10 0 0 1 10 10v26a10 10 0 0 1-10 10h-8c-2-6-3-12-3-16h-6c0-12 2-22 6-30z" fill="#e6e9f0"/><path d="M12 13v4M34 13v4M9 32c8 7 20 7 28 0" fill="none" stroke="#1d2f45" stroke-width="2" stroke-linecap="round"/></svg></div>
    <div class="app run"><svg width="46" height="46" viewBox="0 0 46 46"><rect width="46" height="46" rx="10" fill="#fff"/><path d="M14 8h23v30H14z" fill="#1a86d8"/><path d="M14 8h23v5H14z" fill="#0b5aa6"/><path d="M22 15h15v8H22z" fill="#45b8f4"/><path d="m14 22 12 9 11-9v16H14z" fill="#2fa3e6"/><rect x="4" y="14" width="18" height="18" rx="2" fill="#0a66b8"/><text x="13" y="28" class="ltr">O</text></svg></div>
    <div class="app run"><svg width="46" height="46" viewBox="0 0 46 46"><rect width="46" height="46" rx="10" fill="#fff"/><circle cx="24" cy="13" r="5" fill="#7b83eb"/><circle cx="34" cy="15" r="4" fill="#5059c9"/><path d="M28 19h11v11c0 5-4 6-7 5z" fill="#5059c9"/><path d="M15 19h18v12c0 9-18 9-18 0z" fill="#7b83eb"/><rect x="5" y="14" width="18" height="18" rx="2" fill="#4b53bc"/><text x="14" y="28" class="ltr">T</text></svg><span class="badge">1</span></div>
    <div class="app"><svg width="46" height="46" viewBox="0 0 46 46"><rect width="46" height="46" rx="10" fill="#fff"/><path d="M12 8h26v30H12z" fill="#21a366"/><path d="M25 8h13v10H25z" fill="#33c481"/><path d="M12 23h26v15H12z" fill="#107c41"/><path d="M25 29h13v9H25z" fill="#185c37"/><rect x="4" y="14" width="18" height="18" rx="2" fill="#107c41"/><text x="13" y="28" class="ltr">X</text></svg></div>
    <div class="app run"><svg width="46" height="46" viewBox="0 0 46 46"><rect width="46" height="46" rx="10" fill="#fff"/><path d="M11 8h26v30H11z" fill="#ca64ea"/><path d="M31 14h6v8h-6z" fill="#ae4bd5"/><path d="M31 22h6v8h-6z" fill="#9332bf"/><path d="M31 30h6v8h-6z" fill="#7719aa"/><rect x="4" y="14" width="18" height="18" rx="2" fill="#7719aa"/><text x="13" y="28" class="ltr">N</text></svg></div>
    <div class="app"><svg width="46" height="46" viewBox="0 0 46 46"><rect width="46" height="46" rx="10" fill="#fff"/><path d="m11 17-6 6 14 14 6-6z" fill="#185abd"/><path d="M36 9 42 15 20 37l-6-6z" fill="#3a9ef0"/></svg></div>
    <div class="app run"><svg width="46" height="46" viewBox="0 0 46 46"><rect width="46" height="46" rx="10" fill="#fff"/><use href="#edge-mark" x="7" y="7" width="32" height="32"/></svg></div>
    <div class="app"><svg width="46" height="46" viewBox="0 0 46 46"><rect width="46" height="46" rx="10" fill="#f7f7f7"/><path d="M0 15v-5A10 10 0 0 1 10 0h26a10 10 0 0 1 10 10v5z" fill="#f04b48"/><text x="23" y="12" class="cal-m">FEB</text><text x="23" y="38" class="cal-d">27</text></svg></div>
    <div class="app"><svg width="46" height="46" viewBox="0 0 46 46"><rect width="46" height="46" rx="10" fill="#f8f7f4"/><path d="M0 12v-2A10 10 0 0 1 10 0h26a10 10 0 0 1 10 10v2z" fill="#fcc917"/><path d="M0 14h46" stroke="#aaa" stroke-dasharray="1 1"/><path d="M0 24h46M0 35h46" stroke="#d8d8d8"/></svg></div>
    <div class="app run"><svg width="46" height="46" viewBox="0 0 46 46"><rect width="46" height="46" rx="10" fill="#b30b00"/><path d="M10 35c-3-4 6-7 13-8 7-2 15 0 14 4-2 4-10-1-14-7-3-5-5-12-1-14 5 0 2 11-1 16-3 6-8 12-11 9z" fill="none" stroke="#fff" stroke-width="2.200"/></svg></div>
    <div class="app run"><svg width="46" height="46" viewBox="0 0 46 46"><rect width="46" height="46" rx="9" fill="#49021f"/><text x="23" y="32" class="adobe" fill="#ff3366">Id</text></svg></div>
    <div class="app run"><svg width="46" height="46" viewBox="0 0 46 46"><rect width="46" height="46" rx="9" fill="#49021f"/><text x="23" y="32" class="adobe" fill="#ff3366">Id</text></svg></div>
    <div class="app"><svg width="46" height="46" viewBox="0 0 46 46"><rect width="46" height="46" rx="9" fill="#001e36"/><text x="23" y="32" class="adobe" fill="#31a8ff">Ps</text></svg></div>
    <div class="app"><svg width="46" height="46" viewBox="0 0 46 46"><rect width="46" height="46" rx="9" fill="#330000"/><text x="23" y="32" class="adobe" fill="#ff9a00">Ai</text></svg></div>
    <div class="app"><svg width="46" height="46" viewBox="0 0 46 46"><path d="M18 5h28v43H5V18z" fill="#f3371c"/><path d="m5 18 13-13v12z" fill="#b51b10"/><path d="M18 5h28v10c-14 0-18 5-24 12l-17 4V18h13z" fill="#ff6a55" opacity=".6"/><path d="m10 30 18-18" stroke="#fff" stroke-width="2"/><circle cx="20" cy="20" r="4" fill="#fff"/><path d="m18 24-3 10h4v4h3v-4h5l-5-10z" fill="#fff"/><path d="M26 9h4v4h-4zM8 28h4v4H8z" fill="#fff"/></svg></div>
    <div class="app"><svg width="46" height="46" viewBox="0 0 46 46"><path d="M4 6h42v42H4z" fill="#f7b90f"/><path d="m3 11 24-7 4 33-22 5z" fill="#f7f7f2" stroke="#555"/><path d="m6 17 21-5M7 23l21-5M8 29l21-5M9 35l20-5M11 9l5 31M17 8l5 31" stroke="#aaa" stroke-width=".8"/><path d="m25 5 7-2 4 34-7 1z" fill="#f4d273" stroke="#6b531d"/></svg></div>
    <div class="app"><svg class="large" width="54" height="54" viewBox="0 0 54 54"><rect width="54" height="54" rx="24" fill="#e8192f"/><path d="M20 13h17l-7 10h9L29 32h7L18 43l6-11h-8l8-9h-8z" fill="#fff"/></svg></div>
    <div class="app"><svg class="large" width="54" height="54" viewBox="0 0 54 54"><path d="M14 38C2 31 8 22 6 14 4 2 14-2 18 5c3 6-2 12 4 20z" fill="#8a735d"/><path d="M11 8c4 5 0 12 6 22" stroke="#a79784" stroke-width="3" fill="none"/><path d="M24 20c0-8 4-11 8-12l2-5 2 5c7 2 9 8 7 12-2 2-5 3-6 5l4 8c3 3 3 14-1 18H22c-4-8-5-16 2-31z" fill="#8d5f33"/><path d="M32 26c5 3 6 14 3 20l-7-8z" fill="#e0c8a2"/><circle cx="35" cy="14" r="2" fill="#111"/><path d="m23 37 23-10" stroke="#26303a" stroke-width="5" stroke-linecap="round"/><circle cx="16" cy="38" r="12" fill="#7d9dc0" stroke="#4a5f77" stroke-width="2"/></svg></div>
    <div class="app run"><svg width="46" height="46"><use href="#spot-mark"/></svg></div>
    <div class="app"><svg width="46" height="46" viewBox="0 0 46 46"><rect width="46" height="46" rx="10" fill="#fff"/><path d="M10 10h12v12H10zM24 10h12v12H24zM10 24h12v12H10zM24 24h12v12H24z" fill="url(#g-win)"/></svg></div>
    <div class="dock-rule"></div>
    <div class="app"><svg class="large" width="54" height="54" viewBox="0 0 54 54"><path d="M2 8h15l5 4h30v6H2z" fill="#3a9fd0"/><rect x="1" y="14" width="52" height="36" rx="3" fill="url(#g-folder)"/><path d="m20 40 8-16M34 40l-8-16M17 34h20" stroke="#3d9dcf" stroke-width="2.500" stroke-linecap="round"/></svg></div>
    <div class="app"><svg class="large" width="54" height="54" viewBox="0 0 54 54"><rect x="6" y="14" width="42" height="32" rx="3" fill="#55b6ea"/><path d="M11 7h21l11 11v35H11z" fill="#e3dad6"/><path d="M12 13h21M12 23h30M12 33h30M12 43h30" stroke="#514543" stroke-width="3" stroke-dasharray="2 3"/><path d="M13 17h20M13 27h29M13 37h29M13 48h29" stroke="#b0847c" stroke-width="3" stroke-dasharray="5 3"/><path d="M17 8v44M29 8v44M37 20v32" stroke="#e06a62" stroke-width="3"/><path d="m32 7 11 11H32z" fill="#fff"/></svg></div>
    <div class="app"><svg class="large" width="54" height="54" viewBox="0 0 54 54"><path d="M1 10h52v34H1z" fill="#f6f4f5"/><path d="M1 10h52v4H1zM1 14h16v20H1z" fill="#eebfca"/><path d="M20 18h16M20 22h24M20 26h20M20 30h22M20 34h12M4 20h10M4 26h10" stroke="#999" stroke-width="1"/><rect x="35" y="36" width="17" height="16" rx="4" fill="#fff"/><path d="M40 39h10v10H40z" fill="#2a9be4"/><path d="M37 41h8v7h-8z" fill="#0a66b8"/></svg></div>
    <div class="app"><svg class="large" width="54" height="54" viewBox="0 0 54 54"><path d="M1 13h52v28H1z" fill="#101010"/><path d="M12 15h32v12H12z" fill="#1a4a1d"/><path d="M46 15h6v10h-6z" fill="#a33a45"/><path d="M3 19h5M3 25h5M3 31h5" stroke="#a77" stroke-width="3"/><path d="M11 36h30" stroke="#a8a296" stroke-width="4" stroke-dasharray="4 2"/><use href="#spot-mark" x="35" y="35" width="18" height="18"/></svg></div>
    <div class="app"><svg class="large" width="54" height="54" viewBox="0 0 54 54"><path d="M1 13h52v28H1z" fill="#fcfcfc"/><path d="M1 13h52v2H1z" fill="#dfe6ee"/><path d="M18 22h12M16 26h16M16 30h14" stroke="#bbb"/><path d="M34 19h4v4h-4z" fill="#eec5a6"/><rect x="35" y="36" width="17" height="17" rx="4" fill="#fff"/><use href="#edge-mark" x="37" y="38" width="13" height="13"/></svg></div>
    <div class="app"><svg class="large" width="54" height="54" viewBox="0 0 54 54"><path d="m8 7 4 41c3 5 27 5 30 0l4-41z" fill="#dfe2e5"/><path d="M14 14l2 34M40 14l-2 34M27 13v37" stroke="#cfd3d8" stroke-width="3"/><ellipse cx="27" cy="8" rx="19" ry="5" fill="#a9afb5"/><path d="m11 8 5-6 5 3 6-4 5 5 6-3 5 5-7 5-8-2-8 2z" fill="#f4f4f4" stroke="#6b6b6b"/><path d="m19 6 4 5M31 4l-3 6M37 6l3 4" stroke="#45607c" stroke-width="2"/></svg></div>
  </div>
</div>
<script src="rulers.js"></script>
</body>
</html>
```
FILE: styles.css
```css
* { box-sizing: border-box; }
body {
  margin: 0;
  min-height: 100vh;
  display: flex;
  flex-direction: column;
  background: #0084cc;
  font-family: "Noto Sans", "Open Sans", sans-serif;
  font-size: 14px;
  color: #f0f0f0;
}
.sprite { position: absolute; width: 0; height: 0; }
svg { display: block; flex: none; }
button, input, select {
  font: inherit;
  color: inherit;
  margin: 0;
  padding: 0;
  border: 0;
  border-radius: 0;
  background: none;
  outline: 0;
  appearance: none;
  min-width: 0;
}
button { display: flex; align-items: center; justify-content: center; }
.dim { color: #8c8c8c; }

.window {
  position: relative;
  z-index: 1;
  flex: 1;
  display: flex;
  flex-direction: column;
  background: #535353;
  border-radius: 10px 10px 0 0;
  box-shadow: 0 4px 36px rgba(0, 40, 80, .6);
}

/* Title bar */
.titlebar {
  display: flex;
  align-items: flex-start;
  height: 45px;
  border-bottom: 1px solid #3a3a3a;
}
.lights { display: flex; gap: 8px; padding: 11px 0 0 9px; }
.light { width: 12px; height: 12px; border-radius: 50%; }
.close { background: radial-gradient(circle, #7c0c08 0 2px, #ff5f57 3px); }
.min { background: #febc2e; }
.max { background: #28c840; }
.home { margin: 13px 0 0 37px; color: #d4d4d4; }
.titlebar h1 {
  flex: 1;
  margin: 0;
  padding: 7px 70px 0 0;
  text-align: center;
  font-size: 16px;
  line-height: 24px;
  font-weight: 400;
}
.title-actions { display: flex; align-items: center; padding: 7px 19px 0 0; }
.share {
  width: 64px;
  height: 30px;
  border-radius: 15px;
  background: #1473e6;
  color: #fff;
  font-weight: 600;
}
.workspace-pick {
  gap: 12px;
  height: 26px;
  width: 134px;
  margin: 0 6px 0 8px;
  border: solid #4a4a4a;
  border-width: 0 1px;
  font-size: 15px;
  font-weight: 600;
}
.stock {
  display: flex;
  align-items: center;
  gap: 6px;
  width: 162px;
  height: 25px;
  padding-left: 4px;
  border: 1px solid #727272;
  border-radius: 3px;
  background: #454545;
  color: #2e8ae6;
}
.stock input { width: 110px; font-size: 13px; }
.stock input::placeholder { color: #8a8a8a; opacity: 1; }

/* Control bar */
.control-bar {
  display: grid;
  grid-template-columns: 28px 54px 141px 139px 29px 341px 63px 43px 78px 65px 123px 127px 79px 147px 285px 1fr 34px 36px;
  height: 75px;
  padding-top: 8px;
  border-bottom: 1px solid #3a3a3a;
  color: #c6c6c6;
}
.grip-v { width: 4px; height: 24px; margin: 17px 0 0 5px; background: repeating-linear-gradient(#3c3c3c 0 3px, #535353 3px 5px); }
.refpoint { width: 46px; height: 44px; margin-top: 7px; background: #5c5c5c; }
.rows { display: grid; grid-template-rows: 26px 26px; gap: 7px; height: 60px; align-content: start; min-width: 0; }
.ruled { border-left: 1px solid #4a4a4a; padding-left: 6px; }
.inset-s { padding-left: 9px; }
.inset-m { padding-left: 10px; }
.inset-l { padding-left: 14px; }
.row { display: flex; align-items: center; min-width: 0; }
.gap-s { gap: 5px; }
.gap-m { gap: 8px; }
.gap-l { gap: 15px; }
.end { justify-content: flex-end; padding-right: 7px; }
.tall { height: 56px; justify-self: start; }
.rows label { width: 16px; color: #f0f0f0; font-size: 13px; font-weight: 600; white-space: nowrap; }
.combo {
  display: flex;
  width: 109px;
  height: 26px;
  border: 1px solid #727272;
  border-radius: 3px;
  background: #454545;
  color: #f2f2f2;
  font-size: 13px;
  font-weight: 500;
}
.combo > * + * { border-left: 1px solid #6a6a6a; }
.combo button { width: 22px; flex: none; }
.combo input, .combo select { flex: 1; padding-left: 5px; width: 20px; }
.off { border-color: #575757; background: #505050; color: #8c8c8c; font-weight: 400; }
.off > * + * { border-left: 0; }
.off button { background: #595959; color: #c0c0c0; }
.opacity { width: 89px; }
.style { width: 227px; }
.style select { background: #e8e8e8; color: #000; padding-left: 9px; }
.boxed { width: 21px; height: 26px; border: 1px solid #727272; border-radius: 3px; background: #484848; color: #f2f2f2; }
.stroke-sample { flex: 1; background: linear-gradient(#000, #000) center / 66px 9px no-repeat #e8e8e8; }
.wrap { width: 27px; height: 26px; border-radius: 3px; }
.wrap.on { background: #2e2e2e; }
.p-box { width: 37px; height: 37px; margin-top: 10px; padding: 4px; background: #606060; }
.p-box span { display: block; height: 29px; border: 1px dashed #999; color: #aaa; text-align: center; font: 25px/27px "Liberation Serif", serif; }

/* Workspace */
.workspace { flex: 1; display: flex; min-height: 0; }
.panel-head { height: 15px; padding-left: 8px; background: #434343; border-bottom: 1px solid #383838; color: #c0c0c0; font-size: 16px; line-height: 11px; }
.panel-head.right { padding: 0 8px; text-align: right; }
.tools { width: 51px; border-right: 2px solid #3b3b3b; color: #c6c6c6; display: flex; flex-direction: column; }
.grip-h { width: 25px; height: 5px; margin: 4px auto 9px; background: repeating-linear-gradient(90deg, #3a3a3a 0 4px, #535353 4px 5px); }
.tool-group { margin-bottom: 2px; }
.tools button { position: relative; width: 34px; height: 26px; margin: 2px 8px 4px; }
.tools button.on { background: #2e2e2e; border-radius: 3px; }
.tools .more::after {
  content: "";
  position: absolute;
  right: 1px;
  bottom: 1px;
  border: solid transparent;
  border-width: 0 0 5px 5px;
  border-bottom-color: #d0d0d0;
}
.pair { display: flex; justify-content: space-between; align-items: center; height: 18px; padding: 0 6px; margin: 1px 0; }
.fill-stroke { margin: 4px 0 6px 7px; }
.format-box { display: flex; align-items: center; justify-content: center; width: 17px; height: 15px; background: #2e2e2e; }
.format-box i { width: 10px; height: 10px; background: #777; border: 1px solid #aaa; }
.format-t { width: 15px; font: bold 15px/16px "Liberation Serif", serif; }
.tools .solo { margin: 5px 8px 6px; }

.document { flex: 1; min-width: 0; display: flex; flex-direction: column; border-left: 1px solid #444; }
.tabs { display: flex; height: 36px; background: #424242; border-bottom: 1px solid #383838; }
.tab { display: flex; align-items: center; gap: 10px; width: 260px; padding-left: 18px; background: #535353; border-right: 1px solid #383838; font-size: 13px; font-weight: 700; white-space: nowrap; }
.editor { flex: 1; display: grid; grid-template-columns: 20px 1fr 17px; grid-template-rows: 21px 1fr; min-height: 0; }
.ruler { width: 100%; height: 100%; background: #222; overflow: hidden; }
.ruler-x { border-bottom: 2px solid #9a9a9a; }
.ruler-y { border-right: 1px solid #9a9a9a; }
.ruler line { stroke: #a4a4a4; shape-rendering: crispEdges; }
.ruler text { fill: #f4f4f4; font-size: 14px; font-weight: 500; }
.ruler-corner { border-right: 1px solid #9a9a9a; border-bottom: 2px solid #9a9a9a; background: linear-gradient(#999, #999) 0 5px / 100% 1px no-repeat, linear-gradient(#999, #999) 5px 0 / 1px 100% no-repeat #222; }
.scroll-top { background: #4a4a4a; }
.canvas { display: flex; justify-content: center; background: #646464; min-width: 0; min-height: 0; }
.pasteboard { width: 90.3%; padding: 30px 0; display: flex; justify-content: center; background: #696969; border: solid #858585; border-width: 0 1px; }
.page {
  height: 100%;
  aspect-ratio: 681 / 1052;
  background: linear-gradient(#f0b8ee, #f0b8ee) 0 48px / 100% 2px no-repeat, linear-gradient(#f0b8ee, #f0b8ee) 0 calc(100% - 31px) / 100% 2px no-repeat #fff;
  border-left: 1px solid #b06ad8;
  box-shadow: 2px 2px 0 #000;
}
.scrollbar { padding: 64px 0 83px; background: #4a4a4a; border-left: 1px solid #444; }
.thumb { height: 100%; border-radius: 9px; background: #6a6a6a; }

.status { display: flex; align-items: center; gap: 14px; height: 19px; padding: 2px 0 0 17px; background: #505050; color: #c6c6c6; font-size: 12px; font-weight: 600; }
.status select, .status span, .status input { color: #f2f2f2; line-height: 17px; }
.zoom-pick, .profile-pick, .errors { display: flex; align-items: center; justify-content: space-between; }
.zoom-pick { width: 64px; }
.page-pick { display: flex; width: 111px; height: 17px; border: 1px solid #6a6a6a; border-bottom: 0; background: #454545; }
.page-pick input { width: 87px; padding-left: 4px; line-height: 16px; }
.page-pick button { width: 22px; border-left: 1px solid #6a6a6a; }
.preflight { margin-left: 5px; }
.profile-pick { width: 141px; margin-left: 4px; }
.errors { gap: 7px; margin-left: 4px; }
.errors i { width: 13px; height: 13px; border-radius: 50%; background: #1a9a1a; }
.errors .dim { margin-left: 14px; }
.split { margin-left: auto; }
.resize { width: 12px; height: 12px; margin-left: -6px; background: radial-gradient(circle, #777 1px, transparent 1px) 0 0 / 3px 3px; clip-path: polygon(100% 0, 100% 100%, 0 100%); }

.panels { width: 210px; border-left: 3px solid #3c3c3c; }
.panels section { padding-top: 14px; border-bottom: 2px solid #3c3c3c; background: repeating-linear-gradient(90deg, #3a3a3a 0 4px, #535353 4px 5px) 90px 5px / 25px 5px no-repeat; }
.panels section button { justify-content: flex-start; gap: 9px; width: 100%; height: 35px; padding: 0 0 2px 14px; font-size: 14px; font-weight: 700; color: #f4f4f4; }
.panels svg { color: #c8c8c8; }

/* View menu, open over the window */
.menu {
  position: absolute;
  left: 417px;
  top: 0;
  width: 319px;
  padding: 4px 5px 5px;
  background: linear-gradient(#b0b4b9, #babec4 60%);
  border-radius: 0 0 7px 7px;
  box-shadow: 0 4px 14px rgba(0, 0, 0, .4), 0 0 1px #000;
  color: #1f2327;
  font-family: Inter, sans-serif;
  font-size: 13px;
}
.menu button { position: relative; justify-content: space-between; width: 100%; height: 22px; padding: 0 8px 0 19px; border-radius: 5px; }
.menu hr { height: 1px; margin: 5px 9px; border: 0; background: #a0a4a9; }
.menu kbd { display: flex; align-items: center; gap: 4px; font: 14px "DejaVu Sans", sans-serif; color: #8d9297; }
.menu b { min-width: 8px; text-align: right; font: 13px Inter, sans-serif; }
.menu .active { background: #0f74e4; color: #fff; font-weight: 500; }
.menu .active kbd { color: #fff; }
.menu .checked::before { content: ""; position: absolute; left: 6px; top: 5px; width: 5px; height: 10px; border: solid currentColor; border-width: 0 2px 2px 0; rotate: 38deg; }
.menu .sub::after { content: ""; width: 6px; height: 6px; margin-right: 5px; border: solid currentColor; border-width: 2px 2px 0 0; rotate: 45deg; }

/* Desktop and dock */
.desktop { position: relative; display: flex; justify-content: center; height: 106px; padding-top: 30px; background: linear-gradient(90deg, #0088d2, #0078be 35%, #0078be 75%, #008cd6); }
.wall-pencil { position: absolute; left: 92px; top: 27px; filter: drop-shadow(0 2px 2px #0058a0); }
.dock { display: flex; height: 72px; padding: 0 3px; border: 1px solid #7fc4fb; border-radius: 20px; background: #62b2f8; }
.app { position: relative; display: flex; justify-content: center; width: 60px; padding-top: 9px; }
.app .large { margin-top: -4px; }
.app > svg { filter: drop-shadow(0 1px 1px rgba(0, 30, 80, .35)); overflow: visible; }
.run::after { content: ""; position: absolute; left: 28px; top: 65px; width: 4px; height: 4px; border-radius: 50%; background: #0a2f6c; }
.badge { position: absolute; right: 1px; top: 4px; width: 21px; height: 21px; border-radius: 50%; background: #f24b45; color: #fff; text-align: center; font: 13px/21px Inter, sans-serif; }
.dock-rule { width: 1px; height: 53px; margin: 8px 13px 0 12px; background: #2f7fc4; }
.ltr { fill: #fff; font: bold 14px "Open Sans", sans-serif; text-anchor: middle; }
.cal-m { fill: #fff; font: 600 10px Inter, sans-serif; text-anchor: middle; }
.cal-d { fill: #2c2c2c; font: 300 26px Inter, sans-serif; text-anchor: middle; }
.adobe { font: 600 25px "Open Sans", sans-serif; text-anchor: middle; }
```
FILE: rulers.js
```js
// Draws both rulers in inches from the page's top-left corner.
const NS = "http://www.w3.org/2000/svg";
const PAGE_WIDTH_IN = 84;

function add(svg, name, attrs, text) {
  const el = document.createElementNS(NS, name);
  for (const key in attrs) el.setAttribute(key, attrs[key]);
  if (text !== undefined) el.textContent = text;
  svg.appendChild(el);
}

function drawRulers() {
  const page = document.getElementById("page").getBoundingClientRect();
  const canvas = document.getElementById("canvas").getBoundingClientRect();
  const rx = document.getElementById("ruler-x");
  const ry = document.getElementById("ruler-y");
  rx.replaceChildren();
  ry.replaceChildren();
  const inch = page.width / PAGE_WIDTH_IN;

  const ox = page.left - canvas.left;
  for (let i = Math.ceil(-ox / inch); ox + i * inch < canvas.width; i++) {
    const x = Math.round(ox + i * inch);
    const major = i % 16 === 0;
    add(rx, "line", { x1: x, x2: x, y1: major ? 0 : 15, y2: 20 });
    if (major) add(rx, "text", { x: x + 3, y: 14 }, Math.abs(i));
  }

  const oy = page.top - canvas.top;
  for (let i = Math.ceil(-oy / inch); oy + i * inch < canvas.height; i++) {
    const y = Math.round(oy + i * inch);
    const major = i % 16 === 0;
    add(ry, "line", { x1: major ? 0 : 14, x2: 20, y1: y, y2: y });
    if (major) String(Math.abs(i)).split("").forEach((d, n) => add(ry, "text", { x: 2, y: y + 13 + n * 12 }, d));
  }
}

drawRulers();
window.addEventListener("resize", drawRulers);
```
